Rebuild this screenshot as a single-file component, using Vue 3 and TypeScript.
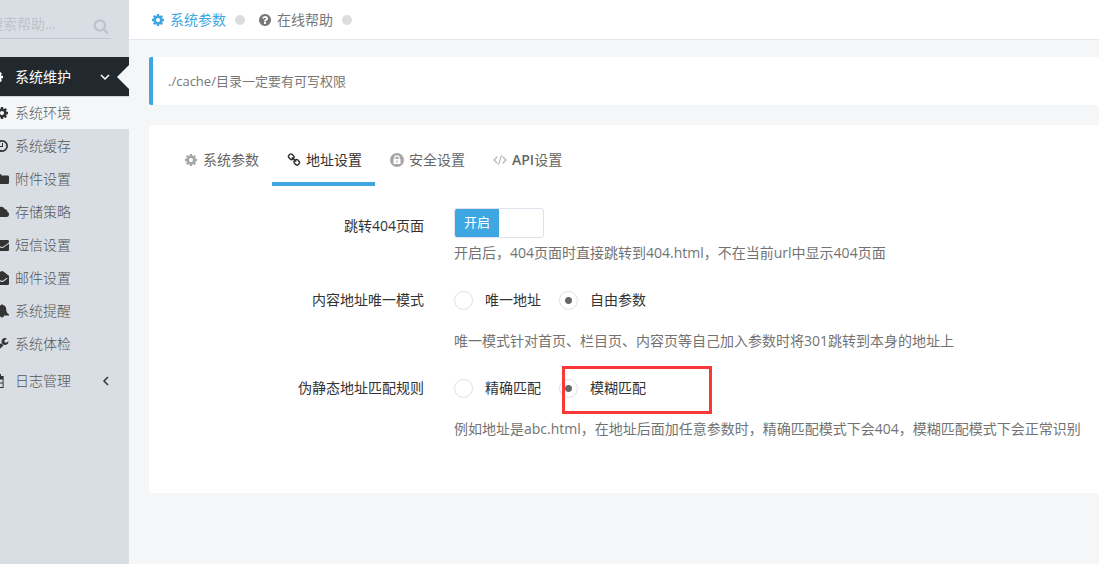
<script setup lang="ts">
import { ref } from 'vue'

interface Shape {
  box: string
  d: string
}

const icons: Record<string, Shape> = {
  cog: {
    box: '0 0 1792 1792',
    d: 'M1152 896q0-106-75-181t-181-75-181 75-75 181 75 181 181 75 181-75 75-181zm512-109v222q0 12-8 23t-20 13l-185 28q-19 54-39 91 35 50 107 138 10 12 10 25t-9 23q-27 37-99 108t-94 71q-12 0-26-9l-138-108q-44 23-91 38-16 136-29 186-7 28-36 28h-222q-14 0-24.5-8.5t-11.5-21.5l-28-184q-49-16-90-37l-141 107q-10 9-25 9-14 0-25-11-126-114-165-168-7-10-7-23 0-12 8-23 15-21 51-66.5t54-70.5q-27-50-41-99l-183-27q-13-2-21-12.5t-8-23.5v-222q0-12 8-23t19-13l186-28q14-46 39-92-40-57-107-138-10-12-10-24 0-10 9-23 26-36 98.5-107.5t94.5-71.5q13 0 26 10l138 107q44-23 91-38 16-136 29-186 7-28 36-28h222q14 0 24.5 8.5t11.5 21.5l28 184q49 16 90 37l142-107q9-9 24-9 13 0 25 10 129 119 165 170 7 8 7 22 0 12-8 23-15 21-51 66.5t-54 70.5q26 50 41 98l183 28q13 2 21 12.5t8 23.5z',
  },
  help: {
    box: '0 0 1792 1792',
    d: 'M1024 1376v-192q0-14-9-23t-23-9h-192q-14 0-23 9t-9 23v192q0 14 9 23t23 9h192q14 0 23-9t9-23zm256-672q0-88-55.5-163t-138.5-116-170-41q-243 0-371 213-15 24 8 42l132 100q7 6 19 6 16 0 25-12 53-68 86-92 34-24 86-24 48 0 85.5 26t37.5 59q0 38-20 61t-68 45q-63 28-115.5 86.5t-52.5 125.5v36q0 14 9 23t23 9h192q14 0 23-9t9-23q0-19 21.5-49.5t54.5-49.5q32-18 49-28.5t46-35 44.5-48 28-60.5 12.5-81zm384 192q0 209-103 385.5t-279.5 279.5-385.5 103-385.5-103-279.5-279.5-103-385.5 103-385.5 279.5-279.5 385.5-103 385.5 103 279.5 279.5 103 385.5z',
  },
  search: {
    box: '0 0 1792 1792',
    d: 'M1216 832q0-185-131.5-316.5t-316.5-131.5-316.5 131.5-131.5 316.5 131.5 316.5 316.5 131.5 316.5-131.5 131.5-316.5zm512 832q0 52-38 90t-90 38q-54 0-90-38l-343-342q-179 124-399 124-143 0-273.5-55.5t-225-150-150-225-55.5-273.5 55.5-273.5 150-225 225-150 273.5-55.5 273.5 55.5 225 150 150 225 55.5 273.5q0 220-124 399l343 343q37 37 37 90z',
  },
  link: {
    box: '0 0 1792 1792',
    d: 'M1520 1216q0-40-28-68l-208-208q-28-28-68-28-42 0-72 32 3 3 19 18.5t21.5 21.5 15 19 13 25.5 3.5 27.5q0 40-28 68t-68 28q-15 0-27.5-3.5t-25.5-13-19-15-21.5-21.5-18.5-19q-33 31-33 73 0 40 28 68l206 207q27 27 68 27 40 0 68-26l147-146q28-28 28-67zm-703-705q0-40-28-68l-206-207q-28-28-68-28-39 0-68 27l-147 146q-28 28-28 67 0 40 28 68l208 208q27 27 68 27 42 0 72-31-3-3-19-18.5t-21.5-21.5-15-19-13-25.5-3.5-27.5q0-40 28-68t68-28q15 0 27.5 3.5t25.5 13 19 15 21.5 21.5 18.5 19q33-31 33-73zm895 705q0 120-85 203l-147 146q-83 83-203 83-121 0-204-85l-206-207q-83-83-83-203 0-123 88-209l-88-88q-86 88-208 88-120 0-204-84l-208-208q-84-84-84-204t85-203l147-146q83-83 203-83 121 0 204 85l206 207q83 83 83 203 0 123-88 209l88 88q86-88 208-88 120 0 204 84l208 208q84 84 84 204z',
  },
  code: {
    box: '-64 0 1920 1920',
    d: 'M553 1399l-50 50q-10 10-23 10t-23-10l-466-466q-10-10-10-23t10-23l466-466q10-10 23-10t23 10l50 50q10 10 10 23t-10 23l-393 393 393 393q10 10 10 23t-10 23zm591-1067l-373 1291q-4 13-15.5 19.5t-23.5 2.5l-62-17q-13-4-19.5-15.5t-2.5-24.5l373-1291q4-13 15.5-19.5t23.5-2.5l62 17q13 4 19.5 15.5t2.5 24.5zm657 651l-466 466q-10 10-23 10t-23-10l-50-50q-10-10-10-23t10-23l393-393-393-393q-10-10-10-23t10-23l50-50q10-10 23-10t23 10l466 466q10 10 10 23t-10 23z',
  },
  lock: {
    box: '0 0 14 14',
    d: 'M7 0a7 7 0 1 0 0 14A7 7 0 0 0 7 0zM4.2 6V5a2.8 2.8 0 0 1 5.6 0v1h.7v5h-7V6zM5.4 6h3.2V5a1.6 1.6 0 0 0-3.2 0zM6.4 7.5v2h1.2v-2z',
  },
  clock: {
    box: '0 0 14 14',
    d: 'M7 1a6 6 0 1 0 0 12A6 6 0 0 0 7 1zM7 2.7a4.3 4.3 0 1 1 0 8.6A4.3 4.3 0 0 1 7 2.7zM7 4h1v4H4.5V7H7z',
  },
  folder: { box: '0 0 14 14', d: 'M1 3.2Q1 2 2.2 2h3Q6.4 2 6.4 3.2V3.6h6.3q1.3 0 1.3 1.3v5.8q0 1.3-1.3 1.3H2.2Q1 12 1 10.7z' },
  cloud: { box: '0 0 14 14', d: 'M3.5 12a3.4 3.4 0 0 1-1.2-6.5A4 4 0 0 1 10 4.2a2.2 2.2 0 0 1 2.3 2.6A2.7 2.7 0 0 1 11.6 12z' },
  mail: {
    box: '0 0 1792 1792',
    d: 'M1792 710v794q0 66-47 113t-113 47h-1472q-66 0-113-47t-47-113v-794q44 49 101 87 362 246 497 345 57 42 92.5 65.5t94.5 48 110 24.5h2q51 0 110-24.5t94.5-48 92.5-65.5q170-123 498-345 57-39 100-87zm0-294q0 79-49 151t-122 123q-376 261-468 325-10 7-42.5 31t-54 38.5-52 32.5-57.5 27-50 9h-2q-23 0-50-9t-57.5-27-52-32.5-54-38.5-42.5-31q-91-64-262-182.5t-205-142.5q-62-42-117-115.5t-55-136.5q0-78 41.5-130t118.5-52h1472q65 0 112.5 47t47.5 113z',
  },
  openMail: {
    box: '0 0 14 14',
    d: 'M0 5.2Q0 4.8.4 4.5L5.6.6Q7-.4 8.4.6l5.2 3.9q.4.3.4.7v7.5q0 1.3-1.3 1.3H1.3Q0 14 0 12.7zM2 6.8l-.5.8 4 3q1.5 1 3 0l4-3-.6-.8-3.9 2.8q-1 .7-2 0z',
  },
  bell: { box: '0 0 14 14', d: 'M6.2 1a.8.8 0 0 1 1.6 0q3.4.8 3.4 4.3 0 3.7 2.8 5.2v.9H9a2 2 0 0 1-4 0H0v-.9Q2.8 9 2.8 5.3 2.8 1.8 6.2 1z' },
  wrench: {
    box: '0 0 1792 1792',
    d: 'M448 1472q0-26-19-45t-45-19-45 19-19 45 19 45 45 19 45-19 19-45zm644-420l-682 682q-37 37-90 37-52 0-91-37l-106-108q-38-36-38-90 0-53 38-91l681-681q39 98 114.5 173.5t173.5 114.5zm634-435q0 39-23 106-47 134-164.5 217.5t-258.5 83.5q-185 0-316.5-131.5t-131.5-316.5 131.5-316.5 316.5-131.5q58 0 121.5 16.5t107.5 46.5q16 11 16 28t-16 28l-293 169v224l193 107q5-3 79-48.5t135.5-81 70.5-35.5q15 0 23.5 10t8.5 25z',
  },
  calendar: { box: '0 0 14 14', d: 'M1 2h2V0h2v2h4V0h2v2h2.6v12H1zM2 5.4V13h2.6V5.4zm3.6 0V13h3V5.4zm4 0V13h3V5.4zM2 8.4h10.6v1H2z' },
}

const menu = [
  { name: '系统环境', icon: 'cog', active: true },
  { name: '系统缓存', icon: 'clock' },
  { name: '附件设置', icon: 'folder' },
  { name: '存储策略', icon: 'cloud' },
  { name: '短信设置', icon: 'mail' },
  { name: '邮件设置', icon: 'openMail' },
  { name: '系统提醒', icon: 'bell' },
  { name: '系统体检', icon: 'wrench' },
]

const crumbs = [
  { name: '系统参数', icon: 'cog', active: true },
  { name: '在线帮助', icon: 'help', active: false },
]

const tabs = [
  { prefix: '', name: '系统参数', icon: 'cog' },
  { prefix: '', name: '地址设置', icon: 'link' },
  { prefix: '', name: '安全设置', icon: 'lock' },
  { prefix: 'API', name: '设置', icon: 'code' },
]

const tab = ref(1)
const keyword = ref('')
const jump = ref(true)
const unique = ref('free')
const rule = ref('fuzzy')
</script>

<template>
  <div class="page">
    <aside class="sidebar">
      <div class="inner">
        <form class="search" @submit.prevent>
          <input v-model="keyword" type="text" placeholder="搜索帮助..." aria-label="搜索帮助" />
          <button type="submit" aria-label="搜索">
            <svg :viewBox="icons.search.box"><path :d="icons.search.d" /></svg>
          </button>
        </form>
        <nav>
          <a href="#" class="group open">
            <svg class="icon" :viewBox="icons.cog.box"><path :d="icons.cog.d" /></svg>
            <span>系统维护</span>
            <svg class="chevron" viewBox="0 0 10 10"><path d="M1 3l4 4 4-4" /></svg>
          </a>
          <ul>
            <li v-for="m in menu" :key="m.name">
              <a href="#" class="item" :class="{ active: m.active }">
                <svg class="icon" :viewBox="icons[m.icon].box"><path :d="icons[m.icon].d" fill-rule="evenodd" /></svg>
                <span>{{ m.name }}</span>
              </a>
            </li>
          </ul>
          <a href="#" class="group">
            <svg class="icon" :viewBox="icons.calendar.box"><path :d="icons.calendar.d" fill-rule="evenodd" /></svg>
            <span>日志管理</span>
            <svg class="chevron" viewBox="0 0 10 10"><path d="M8 1L4 5l4 4" /></svg>
          </a>
        </nav>
      </div>
    </aside>

    <div class="main">
      <header class="topbar">
        <template v-for="c in crumbs" :key="c.name">
          <a href="#" :class="{ active: c.active }">
            <svg class="icon" :viewBox="icons[c.icon].box"><path :d="icons[c.icon].d" /></svg>
            <span>{{ c.name }}</span>
          </a>
          <i class="dot"></i>
        </template>
      </header>

      <main class="content">
        <p class="note">./cache/目录一定要有可写权限</p>

        <section class="card">
          <div class="tabs" role="tablist">
            <button
              v-for="(t, i) in tabs"
              :key="t.icon"
              type="button"
              role="tab"
              :aria-selected="tab === i"
              :class="{ active: tab === i }"
              @click="tab = i"
            >
              <svg class="icon" :viewBox="icons[t.icon].box"><path :d="icons[t.icon].d" fill-rule="evenodd" /></svg>
              <span><b v-if="t.prefix">{{ t.prefix }}</b>{{ t.name }}</span>
            </button>
          </div>

          <form class="form" @submit.prevent>
            <div class="row">
              <label class="label tall" for="jump">跳转404页面</label>
              <div class="field">
                <label class="switch">
                  <input id="jump" v-model="jump" type="checkbox" />
                  <span>开启</span>
                </label>
                <p class="hint">开启后，404页面时直接跳转到404.html，不在当前url中显示404页面</p>
              </div>
            </div>

            <div class="row" role="radiogroup" aria-labelledby="unique-label">
              <span id="unique-label" class="label">内容地址唯一模式</span>
              <div class="field">
                <div class="radios">
                  <label><input v-model="unique" type="radio" name="unique" value="only" />唯一地址</label>
                  <label><input v-model="unique" type="radio" name="unique" value="free" />自由参数</label>
                </div>
                <p class="hint">唯一模式针对首页、栏目页、内容页等自己加入参数时将301跳转到本身的地址上</p>
              </div>
            </div>

            <div class="row" role="radiogroup" aria-labelledby="rule-label">
              <span id="rule-label" class="label">伪静态地址匹配规则</span>
              <div class="field">
                <div class="radios">
                  <label><input v-model="rule" type="radio" name="rule" value="exact" />精确匹配</label>
                  <label><input v-model="rule" type="radio" name="rule" value="fuzzy" />模糊匹配</label>
                  <i class="marker"></i>
                </div>
                <p class="hint">例如地址是abc.html，在地址后面加任意参数时，精确匹配模式下会404，模糊匹配模式下会正常识别</p>
              </div>
            </div>
          </form>
        </section>
      </main>
    </div>
  </div>
</template>

<style>
body {
  margin: 0;
  background: #f4f6f8;
}
</style>

<style scoped>
.page,
.page * {
  box-sizing: border-box;
}
.page {
  display: flex;
  min-height: 100vh;
  overflow: hidden;
  color: #333;
  font: 14px/20px 'Open Sans', 'Noto Sans CJK SC', sans-serif;
}
a {
  color: inherit;
  text-decoration: none;
}
button,
input {
  font: inherit;
  color: inherit;
}
svg {
  fill: currentColor;
  flex: none;
}
.icon {
  width: 14px;
  height: 14px;
}
.sidebar {
  flex: none;
  width: 129px;
  overflow: hidden;
  background: #d9dee4;
}
.inner {
  margin-left: -29px;
}
.search {
  display: flex;
  align-items: center;
  height: 29px;
  margin: 10px 18px 18px;
  border-bottom: 1px solid #bfc7cf;
  color: #bcc4cc;
}
.search input {
  flex: 1;
  min-width: 0;
  padding: 0;
  border: 0;
  outline: 0;
  background: none;
}
.search input::placeholder {
  color: #bcc4cc;
  opacity: 1;
}
.search button {
  display: flex;
  padding: 4px 2px 0;
  border: 0;
  background: none;
}
.search svg {
  width: 16px;
  height: 16px;
}
.group {
  position: relative;
  display: flex;
  align-items: center;
  gap: 11px;
  height: 39px;
  padding: 0 19px;
  font-weight: 300;
}
.group span,
.item span {
  color: #555;
}
.open {
  background: #21292e;
  color: #fff;
  font-weight: 400;
}
.open span {
  color: #fff;
}
.open::after {
  content: '';
  position: absolute;
  top: 8px;
  right: 0;
  border: 12px solid transparent;
  border-left: 0;
  border-right-color: #f4f6f8;
}
.chevron {
  width: 10px;
  height: 10px;
  margin-left: auto;
  fill: none;
  stroke: currentColor;
  stroke-width: 1.5;
}
ul {
  margin: 0;
  padding: 0;
  list-style: none;
  border-top: 1px solid #d0d6dd;
}
.item {
  display: flex;
  align-items: center;
  gap: 6px;
  height: 33px;
  padding-left: 24px;
  border-bottom: 1px solid #d9dee4;
  font-weight: 300;
}
.item.active {
  background: #f4f6f8;
}
.main {
  flex: 1;
  min-width: 0;
}
.topbar {
  display: flex;
  align-items: center;
  height: 40px;
  padding-left: 22px;
  border-bottom: 1px solid #e4e8ee;
  background: #fff;
  color: #777;
}
.topbar a {
  display: flex;
  align-items: center;
  gap: 5px;
}
.topbar .active {
  color: #3ea7e1;
}
.dot {
  width: 10px;
  height: 10px;
  margin: 0 13px 0 9px;
  border-radius: 50%;
  background: #ddd;
}
.content {
  padding: 17px 0 20px 20px;
}
.note {
  margin: 0 0 20px;
  padding: 14px 15px;
  border-left: 4px solid #3ea7e1;
  border-radius: 2px 0 0 2px;
  background: #fff;
  color: #777;
  font-size: 13px;
}
.card {
  padding: 10px 0 34px 20px;
  border-radius: 2px 0 0 2px;
  background: #fff;
}
.tabs {
  display: flex;
}
.tabs button {
  display: flex;
  align-items: center;
  gap: 5px;
  padding: 15px 13px 12px 15px;
  border: 0;
  border-bottom: 4px solid transparent;
  background: none;
  color: #666;
}
.tabs b {
  font-weight: 600;
}
.tabs .icon {
  color: #a6a6a6;
}
.tabs .active {
  border-color: #3ea7e1;
  color: #333;
}
.tabs .active .icon {
  color: #333;
}
.form {
  padding-top: 22px;
}
.row {
  display: flex;
  gap: 30px;
}
.label {
  flex: none;
  width: 255px;
  padding: 7px 0;
  text-align: right;
}
.tall {
  padding-top: 8px;
}
.field {
  flex: 1;
  min-width: 0;
  white-space: nowrap;
}
.hint {
  margin: 5px 0 20px;
  color: #737373;
}
.switch {
  display: block;
  width: 90px;
  height: 30px;
  border: 1px solid #e0e1ec;
  border-radius: 3px;
  overflow: hidden;
}
.switch input {
  position: absolute;
  opacity: 0;
}
.switch span {
  display: block;
  width: 44px;
  height: 28px;
  background: #3ea7e1;
  color: #fff;
  font-size: 13px;
  line-height: 26px;
  text-align: center;
}
.radios {
  position: relative;
  display: flex;
  gap: 18px;
  padding: 7px 0;
}
.radios + .hint {
  margin: 14px 0 20px;
}
.radios label {
  display: flex;
  align-items: center;
  gap: 12px;
}
.radios input {
  width: 19px;
  height: 19px;
  margin: 0;
  appearance: none;
  border: 1px solid #e0e1ec;
  border-radius: 50%;
}
.radios input:checked {
  background: radial-gradient(circle, #666 0 3px, transparent 4px);
}
.marker {
  position: absolute;
  top: -5px;
  left: 108px;
  width: 150px;
  height: 48px;
  border: 3px solid #fb3838;
  pointer-events: none;
}
</style>
